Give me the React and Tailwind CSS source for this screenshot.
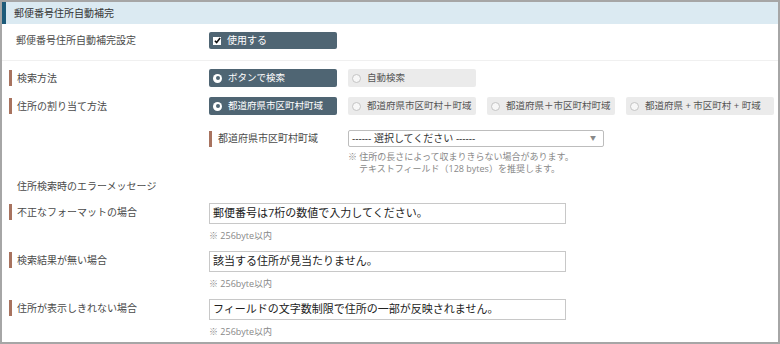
import React from "react";

const font = { fontFamily: '"Open Sans", "Noto Sans CJK JP", sans-serif' };

function Label({ children, bar }) {
  return (
    <div className="flex items-center h-[16px]">
      {bar ? (
        <span className="ml-[7px] w-[3px] h-[16px] bg-[#a8735f]" />
      ) : (
        <span className="ml-[7px] w-[3px]" />
      )}
      <span className="ml-[5px] text-[10px] leading-[16px] text-[#4a4a4a]">{children}</span>
    </div>
  );
}

function Radio({ label, checked, wide }) {
  return (
    <div
      className={
        "flex items-center h-[18px] rounded-[2px] pl-[4px] whitespace-nowrap " +
        (wide ? "w-[148px] " : "w-[128px] ") +
        (checked ? "bg-[#4f6573] text-white" : "bg-[#ebebeb] text-[#555]")
      }
    >
      {checked ? (
        <span className="w-[9px] h-[9px] rounded-full bg-white flex items-center justify-center shrink-0">
          <span className="w-[4px] h-[4px] rounded-full bg-[#4f6573]" />
        </span>
      ) : (
        <span className="w-[9px] h-[9px] rounded-full bg-[#f7f7f7] border border-[#c4c4c4] shrink-0" />
      )}
      <span className="ml-[6px] text-[9.5px] leading-[18px]">{label}</span>
    </div>
  );
}

function MessageRow({ label, value, first }) {
  return (
    <div className={"grid grid-cols-[207px_1fr] " + (first ? "mt-[11px]" : "mt-[9px]")}>
      <div className="pt-[1px]">
        <Label bar>{label}</Label>
      </div>
      <div>
        <div className="w-[357px] h-[21px] border border-[#c8c8c8] px-[3px] flex items-center text-[11px] text-[#222]">
          {value}
        </div>
        <div className="mt-[6px] text-[9px] leading-[12px] text-[#888]">※ 256byte以内</div>
      </div>
    </div>
  );
}

export default function App() {
  return (
    <div
      style={font}
      className="w-[780px] h-[344px] border-2 border-[#a6a6a6] bg-white overflow-hidden"
    >
      <div className="h-[22px] bg-[#dbeaf2] border-l-4 border-[#1d5b7a] pl-[8px] flex items-center text-[10px] text-[#333]">
        郵便番号住所自動補完
      </div>

      <div className="grid grid-cols-[207px_1fr] h-[37px] pt-[8px] border-b border-[#f0f0f0]">
        <div className="flex items-center h-[17px] pl-[14px] text-[10px] text-[#4a4a4a]">
          郵便番号住所自動補完設定
        </div>
        <div className="w-[128px] h-[17px] bg-[#4f6573] rounded-[2px] flex items-center pl-[4px] text-white">
          <span className="w-[8px] h-[8px] bg-white flex items-center justify-center">
            <svg width="7" height="7" viewBox="0 0 8 8">
              <path d="M1 4.2 L3 6.3 L7 1.2" stroke="#111" strokeWidth="1.8" fill="none" />
            </svg>
          </span>
          <span className="ml-[6px] text-[10px]">使用する</span>
        </div>
      </div>

      <div className="grid grid-cols-[207px_1fr] mt-[8px]">
        <div className="pt-[1px]">
          <Label bar>検索方法</Label>
        </div>
        <div className="flex gap-[11px]">
          <Radio label="ボタンで検索" checked />
          <Radio label="自動検索" />
        </div>
      </div>

      <div className="grid grid-cols-[207px_1fr] mt-[10px]">
        <div className="pt-[1px]">
          <Label bar>住所の割り当て方法</Label>
        </div>
        <div className="flex gap-[11px]">
          <Radio label="都道府県市区町村町域" checked />
          <Radio label="都道府県市区町村＋町域" />
          <Radio label="都道府県＋市区町村町域" />
          <Radio label="都道府県 + 市区町村 + 町域" wide />
        </div>
      </div>

      <div className="grid grid-cols-[207px_1fr] mt-[15px]">
        <div />
        <div className="flex">
          <div className="w-[139px] flex items-center h-[17px]">
            <span className="w-[3px] h-[16px] bg-[#a8735f]" />
            <span className="ml-[6px] text-[10px] text-[#4a4a4a]">都道府県市区町村町域</span>
          </div>
          <div>
            <div className="w-[256px] h-[17px] border border-[#bdbdbd] rounded-[2px] flex items-center justify-between px-[3px] text-[10px] text-[#333]">
              <span>------ 選択してください ------</span>
              <span className="text-[6px] text-[#888] mr-[4px]">▼</span>
            </div>
            <div className="mt-[4px] text-[9px] leading-[12px] text-[#888]">
              <div>※ 住所の長さによって収まりきらない場合があります。</div>
              <div className="pl-[11px]">テキストフィールド（128 bytes）を推奨します。</div>
            </div>
          </div>
        </div>
      </div>

      <div className="mt-[5px] pl-[15px] text-[10px] leading-[12px] text-[#4a4a4a]">
        住所検索時のエラーメッセージ
      </div>

      <MessageRow first label="不正なフォーマットの場合" value="郵便番号は7桁の数値で入力してください。" />
      <MessageRow label="検索結果が無い場合" value="該当する住所が見当たりません。" />
      <MessageRow label="住所が表示しきれない場合" value="フィールドの文字数制限で住所の一部が反映されません。" />
    </div>
  );
}
